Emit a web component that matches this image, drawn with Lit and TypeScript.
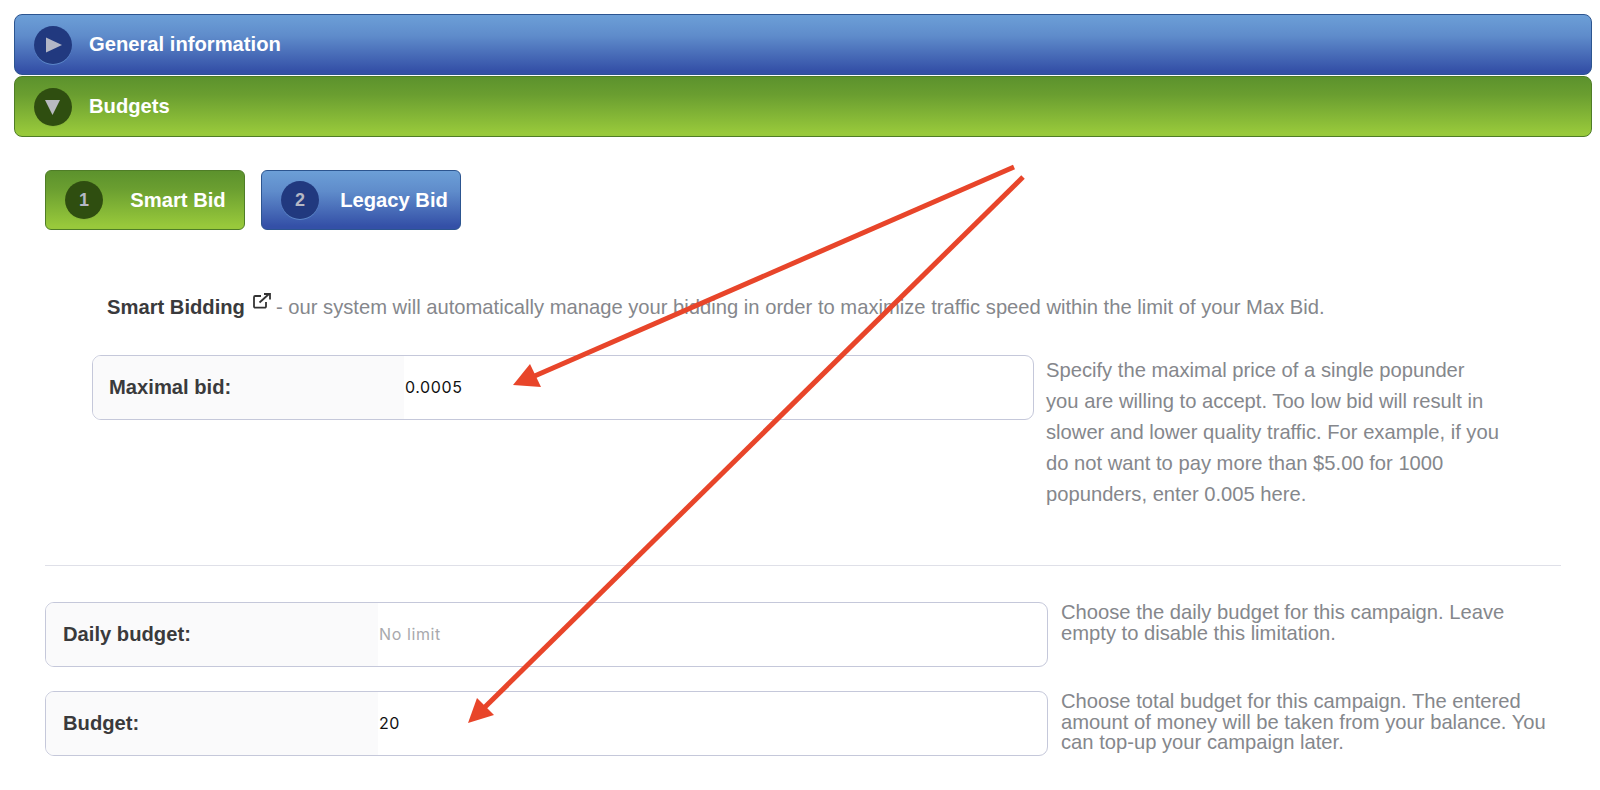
import { LitElement, html, css, svg } from "lit";
import { customElement } from "lit/decorators.js";

@customElement("app-root")
export class AppRoot extends LitElement {
  static styles = css`
    :host { display: block; position: relative; width: 1600px; height: 790px; overflow: hidden; background: #fff; font-family: "Liberation Sans", Arial, sans-serif; color: #333; }
    * { box-sizing: border-box; }
    .accordion { display: flex; flex-direction: column; gap: 1px; padding: 14px 8px 0 14px; }
    .bar { display: flex; align-items: center; height: 61px; border-radius: 8px; padding-left: 19px; gap: 17px; color: #fff; font-weight: 700; font-size: 20.2px; }
    .blue { background: linear-gradient(#6c9fd7, #5f8ccb 35%, #3450a7 95%); border: 1px solid #2c5590; }
    .green { background: linear-gradient(#5c922d, #6a9e30 30%, #98c93b 95%); border: 1px solid #4f7d27; }
    .circle { flex: none; width: 38px; height: 38px; border-radius: 50%; display: flex; align-items: center; justify-content: center; }
    .blue .circle { background: #21397f; box-shadow: 0 1px 0 #5b86c8; }
    .green .circle { background: #2f4e10; box-shadow: 0 1px 0 #8ab83a; }
    .tabs { display: flex; gap: 16px; padding: 33px 0 0 45px; }
    .tab { width: 200px; height: 60px; border-radius: 6px; padding-left: 19px; display: flex; align-items: center; color: #fff; font-weight: 700; font-size: 20.2px; }
    .tab .num { color: #b5b8c4; font-size: 18px; }
    .tab .text { flex: 1; text-align: center; padding-left: 9px; }
    .intro { margin: 60px 0 0 107px; height: 34px; display: flex; align-items: center; font-size: 20.2px; color: #85878c; white-space: pre; }
    .intro b { color: #3a3a3c; }
    .ext { margin: -12px 5px 0 8px; flex: none; }
    .row { display: flex; align-items: flex-start; }
    .row.smart { margin: 31px 0 0 92px; }
    .field { flex: none; display: flex; height: 65px; border: 1px solid #c5c8da; border-radius: 9px; overflow: hidden; background: #fff; }
    .smart .field { width: 942px; }
    .plain .field { width: 1003px; }
    .label { flex: none; display: flex; align-items: center; background: #fafafb; padding-left: 16px; font-weight: 700; font-size: 20.2px; color: #3a3a3c; }
    .smart .label { width: 311px; }
    .plain .label { width: 332px; padding-left: 17px; }
    .field input { flex: 1; min-width: 0; border: 0; outline: 0; background: transparent; padding: 0 0 2px 1px; font: 16px Inter, sans-serif; color: #111; letter-spacing: 0.6px; }
    .field input::placeholder { color: #a8a9ad; opacity: 1; }
    .help { color: #85878c; font-size: 20.2px; }
    .smart .help { margin-left: 12px; width: 460px; line-height: 31px; white-space: nowrap; }
    .plain { margin-left: 45px; }
    .plain .help { margin-left: 13px; width: 490px; line-height: 20.5px; }
    .rule { height: 1px; background: #dfe0e8; margin: 0 39px 0 45px; }
    .rule-wrap { padding-top: 55px; }
    .plain.first { margin-top: 36px; }
    .plain.second { margin-top: 24px; }
    .arrows { position: absolute; inset: 0; width: 1600px; height: 790px; pointer-events: none; }
  `;

  private tri(down: boolean) {
    return html`<svg width="20" height="20" viewBox="0 0 20 20">
      ${down
        ? svg`<polygon points="2,3 17,3 9.5,18" fill="#b9bac0"></polygon>`
        : svg`<polygon points="3,2.5 19,10 3,17.5" fill="#b3b7c6"></polygon>`}
    </svg>`;
  }

  render() {
    return html`
      <div class="accordion">
        <div class="bar blue"><span class="circle">${this.tri(false)}</span>General information</div>
        <div class="bar green"><span class="circle">${this.tri(true)}</span>Budgets</div>
      </div>
      <div class="tabs">
        <div class="tab green"><span class="circle num">1</span><span class="text">Smart Bid</span></div>
        <div class="tab blue"><span class="circle num">2</span><span class="text">Legacy Bid</span></div>
      </div>
      <div class="intro"><b>Smart Bidding</b><svg class="ext" width="18" height="16" viewBox="0 0 18 16" fill="none" stroke="#333" stroke-width="1.8"><path d="M13 9v4.500a1.200 1.200 0 0 1-1.200 1.200H2.200A1.200 1.200 0 0 1 1 13.500V4.200A1.200 1.200 0 0 1 2.200 3H8"></path><path d="M6.500 9.500 16 1"></path><path d="M11 1h6v5.500"></path></svg><span>- our system will automatically manage your bidding in order to maximize traffic speed within the limit of your Max Bid.</span></div>
      <div class="row smart">
        <div class="field"><div class="label">Maximal bid:</div><input type="text" .value=${"0.0005"} /></div>
        <div class="help">Specify the maximal price of a single popunder<br />you are willing to accept. Too low bid will result in<br />slower and lower quality traffic. For example, if you<br />do not want to pay more than $5.00 for 1000<br />popunders, enter 0.005 here.</div>
      </div>
      <div class="rule-wrap"><div class="rule"></div></div>
      <div class="row plain first">
        <div class="field"><div class="label">Daily budget:</div><input type="text" placeholder="No limit" /></div>
        <div class="help">Choose the daily budget for this campaign. Leave empty to disable this limitation.</div>
      </div>
      <div class="row plain second">
        <div class="field"><div class="label">Budget:</div><input type="text" .value=${"20"} /></div>
        <div class="help">Choose total budget for this campaign. The entered amount of money will be taken from your balance. You can top-up your campaign later.</div>
      </div>
      <svg class="arrows" viewBox="0 0 1600 790">
        <line x1="1014" y1="167" x2="530" y2="378" stroke="#e8452a" stroke-width="5"></line>
        <polygon points="513,385 530,364 541,387" fill="#e8452a"></polygon>
        <line x1="1023" y1="177" x2="485" y2="707" stroke="#e8452a" stroke-width="5"></line>
        <polygon points="468,723 477,698 494,715" fill="#e8452a"></polygon>
      </svg>
    `;
  }
}
